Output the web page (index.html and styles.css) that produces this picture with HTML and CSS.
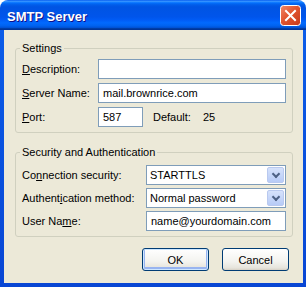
FILE: index.html
```
<!DOCTYPE html>
<html lang="en">
<head>
    <meta charset="UTF-8">
    <title>SMTP Server</title>
    <link rel="stylesheet" href="styles.css">
</head>
<body>

    <div class="window">
        <div class="titlebar">
            <span class="title">SMTP Server</span>
            <span class="close">
                <svg width="21" height="21" viewBox="0 0 21 21">
                    <defs>
                        <linearGradient id="red" x1="0" y1="0" x2="1" y2="1">
                            <stop offset="0" stop-color="#f0896b"/>
                            <stop offset="0.45" stop-color="#e2552f"/>
                            <stop offset="1" stop-color="#c4391b"/>
                        </linearGradient>
                    </defs>
                    <rect x="0.5" y="0.5" width="20" height="20" rx="3" fill="url(#red)" stroke="#fff"/>
                    <path d="M6 6 L15 15 M15 6 L6 15" stroke="#fff" stroke-width="2" stroke-linecap="square"/>
                </svg>
            </span>
        </div>

        <div class="frame">
            <div class="client">
                <fieldset class="group settings">
                    <legend>Settings</legend>
                    <div class="row">
                        <span class="lbl"><u>D</u>escription:</span>
                        <span class="field grow"></span>
                    </div>
                    <div class="row">
                        <span class="lbl"><u>S</u>erver Name:</span>
                        <span class="field grow">mail.brownrice.com</span>
                    </div>
                    <div class="row">
                        <span class="lbl"><u>P</u>ort:</span>
                        <span class="field port">587</span>
                        <span class="default">Default:</span>
                        <span>25</span>
                    </div>
                </fieldset>

                <fieldset class="group security">
                    <legend>Security and Authentication</legend>
                    <div class="row">
                        <span class="lbl">Co<u>n</u>nection security:</span>
                        <span class="field grow select">STARTTLS<span class="drop"></span></span>
                    </div>
                    <div class="row">
                        <span class="lbl">Authent<u>i</u>cation method:</span>
                        <span class="field grow select">Normal password<span class="drop"></span></span>
                    </div>
                    <div class="row">
                        <span class="lbl">User Na<u>m</u>e:</span>
                        <span class="field grow">name@yourdomain.com</span>
                    </div>
                </fieldset>

                <div class="buttons">
                    <button class="btn default-btn">OK</button>
                    <button class="btn">Cancel</button>
                </div>
            </div>
        </div>
    </div>

</body>
</html>
```

FILE: styles.css
```
body {
    margin: 0;
    background: #fff;
    font-family: "Liberation Sans", Arial, sans-serif;
    font-size: 11px;
    color: #000;
}
.window {
    width: 306px;
    height: 287px;
    display: flex;
    flex-direction: column;
    border-radius: 8px 8px 0 0;
    overflow: hidden;
}
.titlebar {
    height: 30px;
    flex: none;
    display: flex;
    align-items: center;
    justify-content: space-between;
    padding: 0 5px 0 7px;
    box-sizing: border-box;
    background: linear-gradient(to bottom, #0058ee 0%, #3a93ff 4%, #288eff 6%, #127dff 8%, #036ffc 10%, #0262ee 14%, #0057e5 20%, #0054e3 24%, #0055eb 56%, #005bf5 66%, #026afe 76%, #0062ef 86%, #0052d6 92%, #0040ab 94%, #003092 100%);
}
.title {
    color: #fff;
    font-weight: bold;
    font-size: 13px;
    text-shadow: 1px 1px #0f1089;
    padding-top: 2px;
}
.close {
    display: flex;
    margin-top: 1px;
}
.frame {
    flex: 1;
    display: flex;
    padding: 0 3px 4px 4px;
    background: linear-gradient(to bottom, #0b5ce8, #0846d4);
}
.client {
    flex: 1;
    background: #ece9d8;
    padding: 12px 10px 0 11px;
}
.group {
    margin: 0;
    border: 1px solid #d0d0bf;
    border-radius: 3px;
    padding: 4px 6px 5px 6px;
}
.group legend {
    padding: 0 2px;
    margin-left: -2px;
    line-height: 13px;
}
.security {
    margin-top: 13px;
    padding-top: 6px;
}
.row {
    display: flex;
    align-items: center;
    height: 20px;
    margin-bottom: 4px;
}
.row:last-child {
    margin-bottom: 0;
}
.security .row {
    margin-bottom: 3px;
}
.security .row:last-child {
    margin-bottom: 0;
}
.lbl {
    width: 76px;
    flex: none;
}
.security .lbl {
    width: 124px;
}
.field {
    height: 20px;
    box-sizing: border-box;
    border: 1px solid #7f9db9;
    background: #fff;
    padding: 0 4px;
    display: flex;
    align-items: center;
    white-space: nowrap;
}
.grow {
    flex: 1;
}
.port {
    width: 45px;
}
.default {
    margin: 0 12px 0 10px;
}
.select {
    justify-content: space-between;
    padding: 0 1px 0 3px;
}
.drop {
    width: 17px;
    height: 16px;
    box-sizing: border-box;
    border: 1px solid #b9c9ef;
    border-radius: 2px;
    background: linear-gradient(to bottom, #d6e2fb, #b7cbf7);
    position: relative;
}
.drop::after {
    content: "";
    position: absolute;
    left: 5px;
    top: 3px;
    width: 4px;
    height: 4px;
    border-right: 2px solid #4d6185;
    border-bottom: 2px solid #4d6185;
    transform: rotate(45deg);
}
.buttons {
    display: flex;
    justify-content: flex-end;
    gap: 13px;
    margin-top: 11px;
    padding-right: 4px;
}
.btn {
    width: 67px;
    height: 23px;
    border: 1px solid #003c74;
    border-radius: 3px;
    background: linear-gradient(to bottom, #ffffff, #f3f3ef 60%, #e6e4dc 90%, #d6d0c5);
    font-family: "Liberation Sans", Arial, sans-serif;
    font-size: 11px;
    color: #000;
    padding: 0;
}
.default-btn {
    box-shadow: inset 0 0 0 1px #cee7ff, inset 0 -1px 0 2px #98b4f0;
}
```
